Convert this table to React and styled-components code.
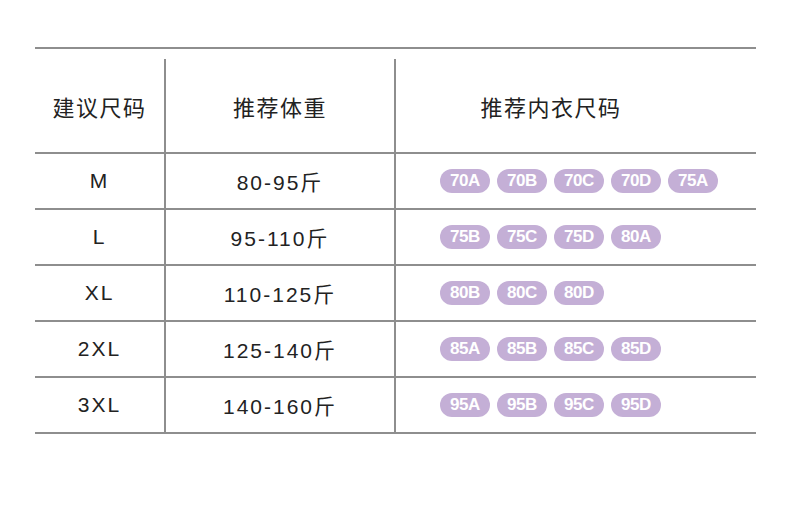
import styled, { createGlobalStyle } from "styled-components";

const rows = [
  { size: "M", weight: "80-95斤", cups: ["70A", "70B", "70C", "70D", "75A"] },
  { size: "L", weight: "95-110斤", cups: ["75B", "75C", "75D", "80A"] },
  { size: "XL", weight: "110-125斤", cups: ["80B", "80C", "80D"] },
  { size: "2XL", weight: "125-140斤", cups: ["85A", "85B", "85C", "85D"] },
  { size: "3XL", weight: "140-160斤", cups: ["95A", "95B", "95C", "95D"] },
];

export default function App() {
  return (
    <>
      <Global />
      <Table>
        <Row $head>
          <Head>建议尺码</Head>
          <Head $divider>推荐体重</Head>
          <Head $divider $offset>推荐内衣尺码</Head>
        </Row>
        {rows.map((r) => (
          <Row key={r.size}>
            <Cell>{r.size}</Cell>
            <Cell $divider>{r.weight}</Cell>
            <Cups>
              {r.cups.map((c) => (
                <Pill key={c}>{c}</Pill>
              ))}
            </Cups>
          </Row>
        ))}
      </Table>
    </>
  );
}

const Global = createGlobalStyle`
  html, body {
    margin: 0;
    background: #fff;
  }
  body {
    width: 790px;
    height: 505px;
    overflow: hidden;
    font-family: "Liberation Sans", "Noto Sans CJK SC", sans-serif;
    color: #222;
  }
`;

const Table = styled.div`
  margin: 47px 0 0 35px;
  width: 721px;
  border-top: 2px solid #8e8e8e;
  padding-top: 10px;
`;

const Row = styled.div`
  display: grid;
  grid-template-columns: 129px 230px 362px;
  height: ${(p) => (p.$head ? "95px" : "56px")};
  box-sizing: border-box;
  border-bottom: 2px solid #8e8e8e;
`;

const Cell = styled.div`
  display: flex;
  align-items: center;
  justify-content: center;
  border-left: ${(p) => (p.$divider ? "2px solid #8e8e8e" : "none")};
  font-size: 21px;
  letter-spacing: 2px;
  color: #222;
`;

const Head = styled(Cell)`
  padding-right: ${(p) => (p.$offset ? "50px" : "0")};
  font-family: "Noto Sans CJK SC", sans-serif;
  font-weight: 400;
  font-size: 22px;
  letter-spacing: 1.5px;
`;

const Cups = styled.div`
  display: flex;
  align-items: center;
  gap: 7px;
  padding-left: 44px;
  border-left: 2px solid #8e8e8e;
`;

const Pill = styled.span`
  display: inline-flex;
  align-items: center;
  justify-content: center;
  width: 50px;
  height: 24px;
  border-radius: 12px;
  background: #c4afd6;
  color: #fff;
  font-family: "Liberation Sans", Arial, sans-serif;
  font-weight: 700;
  font-size: 17px;
  letter-spacing: -0.4px;
`;
